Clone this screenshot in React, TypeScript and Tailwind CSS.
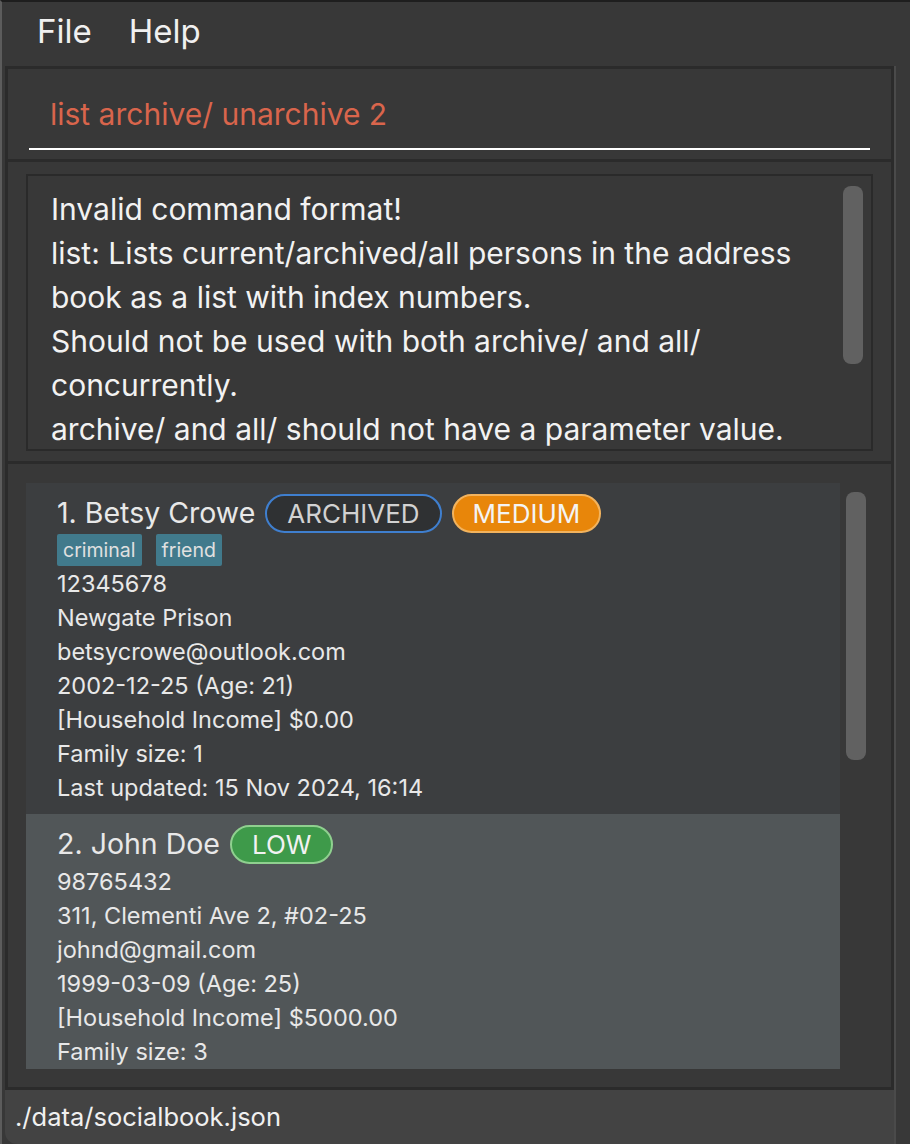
import React from "react";

const font = { fontFamily: "Inter, 'Noto Sans', sans-serif" };

function Card({
  index,
  name,
  badges,
  tags,
  lines,
  bg,
}: {
  index: number;
  name: string;
  badges: React.ReactNode;
  tags?: string[];
  lines: string[];
  bg: string;
}) {
  return (
    <div className={`${bg} pl-[31px] pt-[9px] pb-[9px]`}>
      <div className="flex items-center h-[42px]">
        <span className="text-[28.5px] text-[#e8e8e8] mr-[10px] whitespace-nowrap">
          {index}. {name}
        </span>
        {badges}
      </div>
      {tags && (
        <div className="flex gap-[14px] mt-[-1px] h-[34px] items-center">
          {tags.map((t) => (
            <span
              key={t}
              className="bg-[#417a8c] text-[#e0e0e0] text-[19.5px] leading-[32px] px-[6px] rounded-[2px]"
            >
              {t}
            </span>
          ))}
        </div>
      )}
      <div className="flex flex-col">
        {lines.map((l) => (
          <div
            key={l}
            className="text-[23.5px] leading-[34px] text-[#e8e8e8] whitespace-nowrap"
          >
            {l}
          </div>
        ))}
      </div>
    </div>
  );
}

export default function App() {
  return (
    <div
      style={font}
      className="w-[910px] h-[1144px] bg-[#383838] border-l-[2px] border-l-[#5c5c5c] border-t-[2px] border-t-[#1e1e1e] flex flex-col overflow-hidden"
    >
      {/* menu bar */}
      <div className="h-[64px] flex items-center pl-[35px] pb-[4px] gap-[37px] text-[33px] text-[#f0f0f0]">
        <span>File</span>
        <span>Help</span>
      </div>

      <div className="flex flex-1 min-h-0">
        <div className="w-[889px] ml-[3px] flex flex-col">
          {/* command box */}
          <div className="h-[96px] border-[3px] border-[#2b2b2b] px-[21px] pt-[24px]">
            <div className="border-b-[2px] border-white h-[57px] pl-[21px] text-[30px] text-[#d9654c] leading-[43px]">
              list archive/ unarchive 2
            </div>
          </div>
          {/* result display */}
          <div className="h-[302px] border-x-[3px] border-b-[3px] border-[#2b2b2b] px-[18px] pt-[12px] pb-[10px]">
            <div className="relative h-full border-[2px] border-[#2a2a2a] pl-[23px] pt-[11px] overflow-hidden">
              <div className="text-[30px] leading-[44px] text-[#f2f2f2] whitespace-nowrap">
                <div>Invalid command format!</div>
                <div>list: Lists current/archived/all persons in the address</div>
                <div>book as a list with index numbers.</div>
                <div>Should not be used with both archive/ and all/</div>
                <div>concurrently.</div>
                <div>archive/ and all/ should not have a parameter value.</div>
              </div>
              <div className="absolute right-[8px] top-[10px] w-[20px] h-[178px] rounded-[8px] bg-[#616161]" />
            </div>
          </div>
          {/* list panel */}
          <div className="flex-1 min-h-0 border-x-[3px] border-b-[3px] border-[#2b2b2b] pl-[18px] pt-[19px] pb-[18px] flex">
            <div className="w-[814px] flex flex-col overflow-hidden">
              <Card
                index={1}
                name="Betsy Crowe"
                bg="bg-[#3c3e40]"
                badges={
                  <>
                    <span className="h-[39px] px-[20px] rounded-full border-[2px] border-[#3f7fcf] bg-[#2f3133] text-[#d2d2d2] text-[26px] flex items-center mr-[10px]">
                      ARCHIVED
                    </span>
                    <span className="h-[39px] px-[19px] rounded-full border-[2px] border-[#f2b35e] bg-[#e8860a] text-[#f4f4f4] text-[26px] flex items-center">
                      MEDIUM
                    </span>
                  </>
                }
                tags={["criminal", "friend"]}
                lines={[
                  "12345678",
                  "Newgate Prison",
                  "betsycrowe@outlook.com",
                  "2002-12-25 (Age: 21)",
                  "[Household Income] $0.00",
                  "Family size: 1",
                  "Last updated: 15 Nov 2024, 16:14",
                ]}
              />
              <Card
                index={2}
                name="John Doe"
                bg="bg-[#515658]"
                badges={
                  <span className="h-[39px] px-[20px] rounded-full border-[2px] border-[#8fd08f] bg-[#3e9a4a] text-[#f2f2f2] text-[26px] flex items-center">
                    LOW
                  </span>
                }
                lines={[
                  "98765432",
                  "311, Clementi Ave 2, #02-25",
                  "johnd@gmail.com",
                  "1999-03-09 (Age: 25)",
                  "[Household Income] $5000.00",
                  "Family size: 3",
                ]}
              />
            </div>
            <div className="ml-[6px] pt-[9px]">
              <div className="w-[20px] h-[268px] rounded-[8px] bg-[#616161]" />
            </div>
          </div>
          {/* status bar */}
          <div className="h-[54px] bg-[#434343] pl-[10px] text-[25.5px] leading-[54px] text-[#f0f0f0] rounded-bl-[12px]">
            ./data/socialbook.json
          </div>
        </div>
        <div className="w-[2px] bg-[#4a4a4a]" />
        <div className="flex-1" />
      </div>
    </div>
  );
}
